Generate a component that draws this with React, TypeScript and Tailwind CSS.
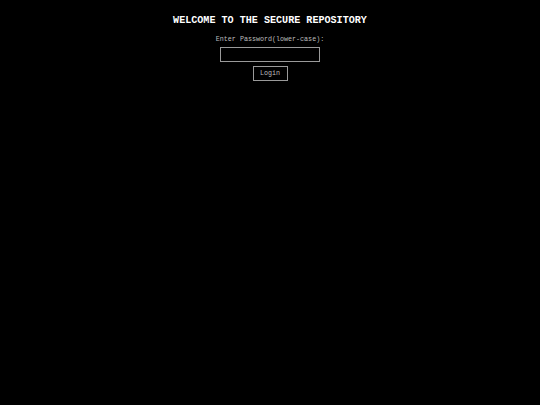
export default function App() {
  return (
    <div className="w-[540px] h-[405px] bg-black flex flex-col items-center antialiased" style={{ fontFamily: '"Liberation Mono", "Courier New", monospace' }}>
      <h1 className="mt-[15px] text-[10.1px] leading-[12px] font-bold text-white">WELCOME TO THE SECURE REPOSITORY</h1>
      <div className="mt-[6px] text-[6.7px] leading-[12px] text-[#bdbdbd]">Enter Password(lower-case):</div>
      <input type="password" className="mt-[2px] w-[100px] h-[15px] bg-black border border-[#9a9a9a] outline-none" />
      <button className="mt-[4px] w-[35px] h-[15px] bg-black border border-[#9a9a9a] text-[6.7px] text-[#bdbdbd] flex items-center justify-center">Login</button>
    </div>
  );
}
